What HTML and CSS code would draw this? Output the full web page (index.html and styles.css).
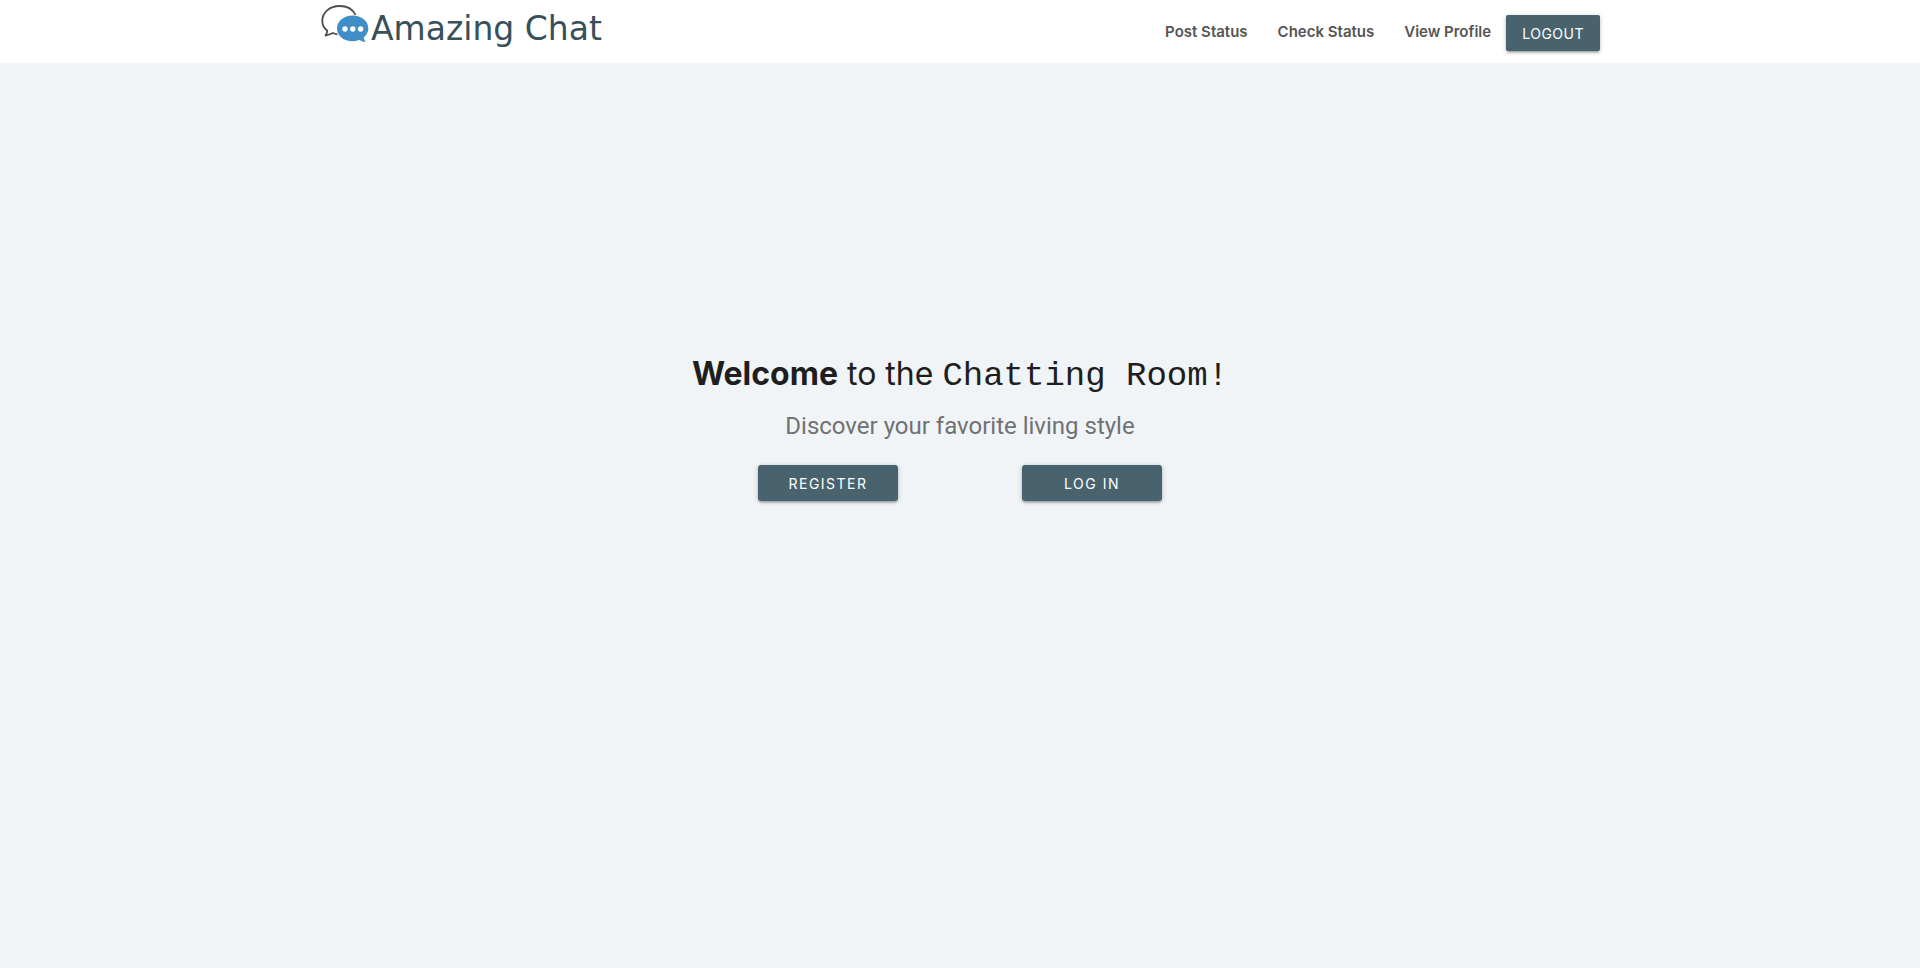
FILE: index.html
```html
<!DOCTYPE html>
<html lang="en">
<head>
<meta charset="utf-8">
<meta name="viewport" content="width=device-width, initial-scale=1">
<title>Amazing Chat</title>
<link rel="stylesheet" href="styles.css">
</head>
<body>
<header class="navbar">
  <nav class="container">
    <a class="brand" href="#">
      <svg class="brand-icon" viewBox="0 0 49 48" aria-hidden="true">
        <path d="M35.500 14.800C32.500 8.800 26.500 6 19.500 6C9.500 6 2.300 12.700 2.300 20.700C2.300 25.700 4.600 28.700 7.300 30.700C7.300 32.700 6.500 34 5.500 35.500C9 35 11 33.800 12.800 33C14.500 33.800 15.700 34.300 17.500 34.300" fill="none" stroke="#4c4c4c" stroke-width="1.800" stroke-linejoin="round"/>
        <path d="M32.500 15.500C41.500 15.500 48.300 21 48.300 28.500C48.300 32 46.500 35 43.800 37.300C43.900 39 44.800 40.700 45.800 42C43 41.800 41 41 39.200 39.800C37 40.800 34.800 41.300 32.500 41.300C24 41.300 17 35.800 17 28.500C17 21 24 15.500 32.500 15.500Z" fill="#418dc8"/>
        <g fill="#fff"><circle cx="25" cy="29" r="2.700"/><circle cx="32.800" cy="29" r="2.700"/><circle cx="40.600" cy="29" r="2.700"/></g>
      </svg>
      <span class="brand-name">Amazing Chat</span>
    </a>
    <ul class="menu">
      <li><a class="menu-link" href="#">Post Status</a></li>
      <li><a class="menu-link" href="#">Check Status</a></li>
      <li><a class="menu-link" href="#">View Profile</a></li>
      <li><button class="btn btn-logout" type="button">LOGOUT</button></li>
    </ul>
  </nav>
</header>
<main class="welcome">
  <h1 class="title"><b>Welcome</b> to the <span class="mono">Chatting Room!</span></h1>
  <p class="tagline">Discover your favorite living style</p>
  <div class="actions">
    <button class="btn btn-wide" type="button">REGISTER</button>
    <button class="btn btn-wide" type="button">LOG IN</button>
  </div>
</main>
</body>
</html>
```
FILE: styles.css
```css
* { box-sizing: border-box; }
body {
  margin: 0;
  min-height: 100vh;
  display: flex;
  flex-direction: column;
  background: #f0f4f7;
  color: #1e1e1e;
  font-family: Inter, "Liberation Sans", sans-serif;
}
.navbar { background: #fff; }
.container {
  width: 90%;
  max-width: 1280px;
  margin: 0 auto;
  display: flex;
  justify-content: space-between;
  align-items: flex-start;
}
.brand {
  display: flex;
  align-items: flex-start;
  color: #37505a;
  text-decoration: none;
}
.brand-icon { width: 49px; height: 48px; }
.brand-name {
  padding-left: 2px;
  font-family: "DejaVu Sans", sans-serif;
  font-size: 33px;
  line-height: 58px;
}
.menu {
  display: flex;
  margin: 0;
  padding: 0;
  list-style: none;
}
.menu-link {
  display: block;
  padding: 0 15px;
  color: #555;
  font-size: 15px;
  font-weight: 600;
  line-height: 63px;
  text-decoration: none;
}
.btn {
  height: 36px;
  padding: 0 16px;
  border: 0;
  border-radius: 2px;
  background: #48636d;
  color: #fff;
  font: 14px Inter, "Liberation Sans", sans-serif;
  box-shadow: 0 2px 2px rgba(0, 0, 0, .14), 0 3px 1px -2px rgba(0, 0, 0, .12), 0 1px 5px rgba(0, 0, 0, .2);
  cursor: pointer;
}
.btn-logout { margin-top: 15px; letter-spacing: .5px; }
.btn-wide {
  width: 140px;
  border-radius: 3px;
  letter-spacing: 1.5px;
}
.welcome {
  flex: 1;
  display: flex;
  flex-direction: column;
  align-items: center;
  justify-content: center;
  padding-bottom: 176px;
  text-align: center;
}
.title {
  margin: 0;
  font-size: 32px;
  font-weight: 400;
  line-height: 40px;
}
.mono { font-family: "Liberation Mono", monospace; font-size: 34px; }
.tagline {
  margin: 12px 0 0;
  color: #707173;
  font-family: Roboto, sans-serif;
  font-size: 24px;
  line-height: 36px;
}
.actions {
  display: flex;
  gap: 124px;
  margin-top: 21px;
}
```
